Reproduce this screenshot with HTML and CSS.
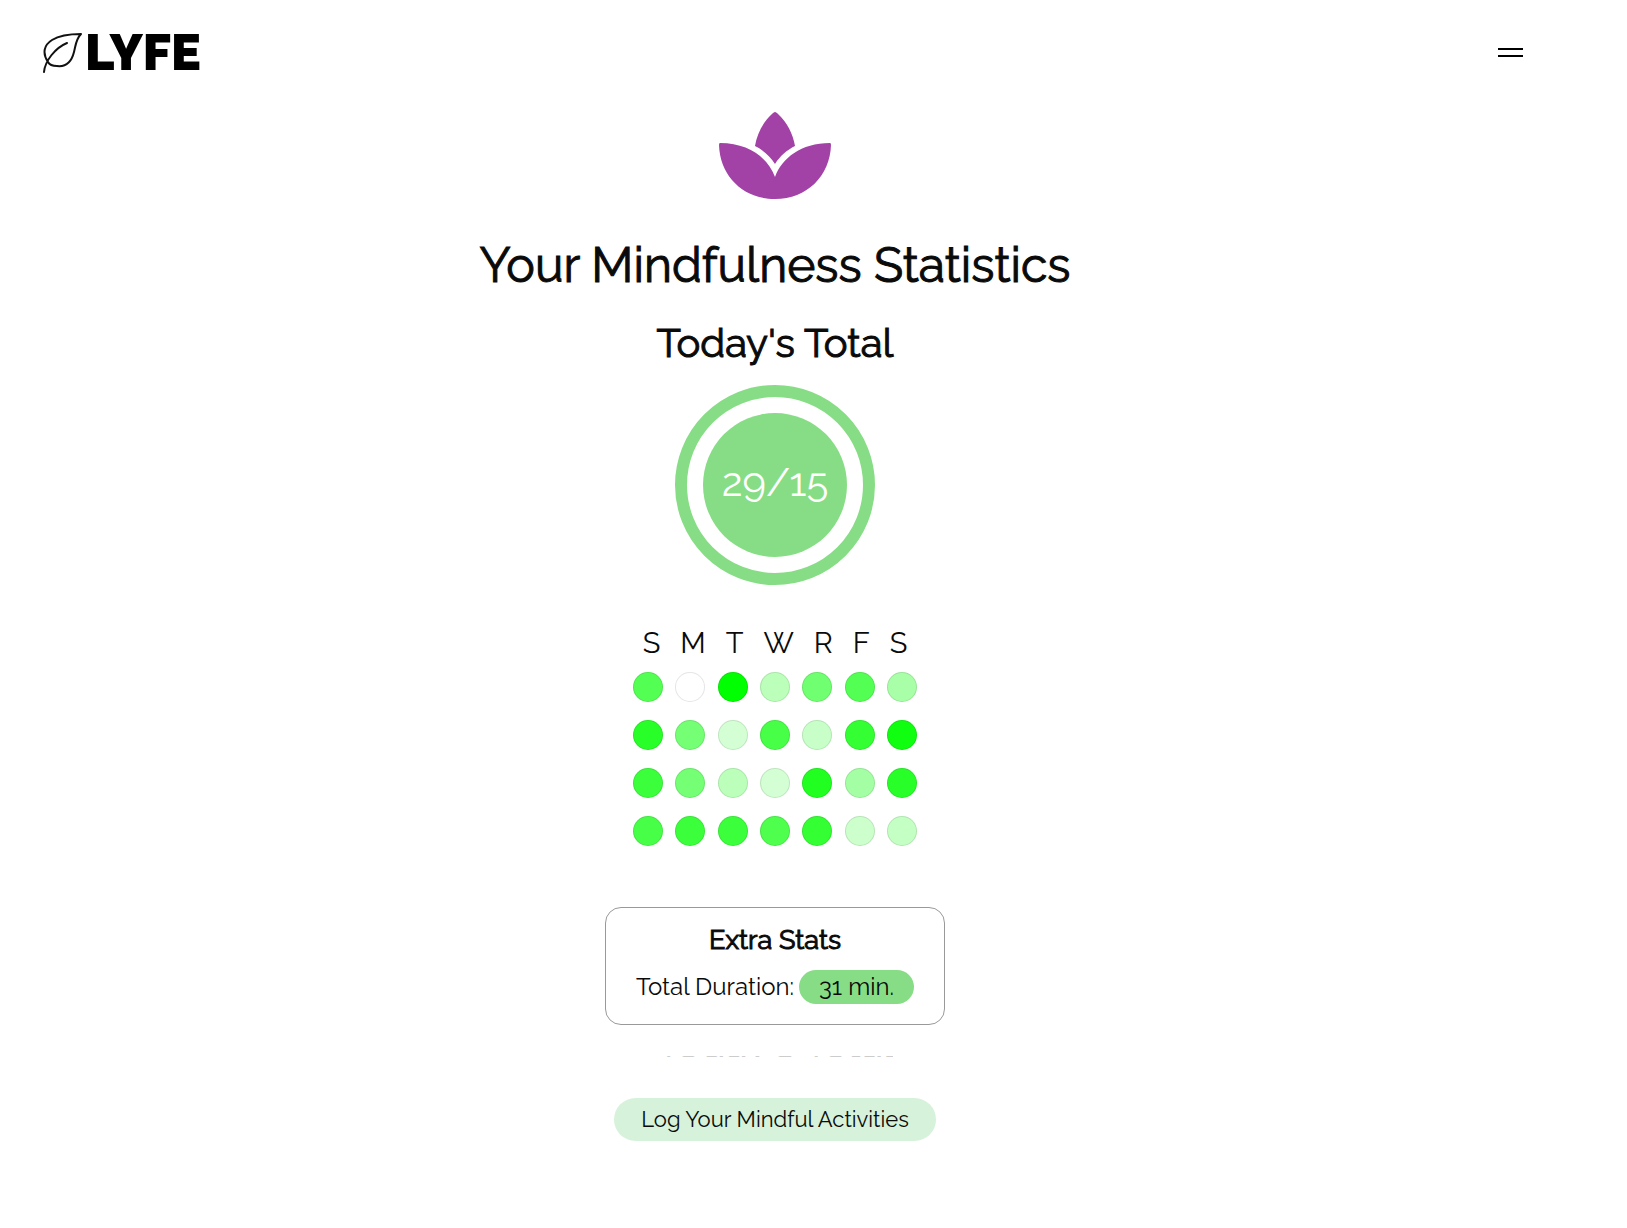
FILE: index.html
```html
<!DOCTYPE html>
<html lang="en">
<head>
  <meta charset="utf-8">
  <meta name="viewport" content="width=device-width, initial-scale=1">
  <title>Lyfe – Your Mindfulness Statistics</title>
  <link rel="stylesheet" href="styles.css">
</head>
<body>
  <header class="topbar">
    <a class="logo" href="#">
      <svg class="logo-leaf" viewBox="0 0 40 40" aria-hidden="true">
        <path d="M1 39C2 28 12 15 24 10M5 29C-1 20 1 12 9 7C17 2 28 1 38 1C33 6 33 11 31 19C28 31 22 34 14 33C9 33 6 31 5 29Z"/>
      </svg>
      <span>LYFE</span>
    </a>
    <button class="menu-toggle" type="button" aria-label="Open menu">
      <span></span>
      <span></span>
    </button>
  </header>

  <main class="stats">
    <svg class="lotus" viewBox="0 0 112 88" aria-hidden="true">
      <path d="M56 0C57 0 58 1 59 2C68 10 74 22 76 34C68 38 61 44 56 52C51 44 44 38 36 34C38 22 44 10 53 2C54 1 55 0 56 0Z"/>
      <path d="M56 65C63 46 82 31 111 31Q112 31 112 33C111 64 88 87 56 87C24 87 1 64 0 33Q0 31 1 31C30 31 49 46 56 65Z"/>
    </svg>
    <h1>Your Mindfulness Statistics</h1>

    <section class="today">
      <h2>Today's Total</h2>
      <div class="ring"><div class="ring-core">29/15</div></div>
    </section>

    <section class="month" aria-label="Last four weeks">
      <div class="weekdays">
        <span>S</span><span>M</span><span>T</span><span>W</span><span>R</span><span>F</span><span>S</span>
      </div>
      <div class="days">
        <i style="--level:#54ff54"></i><i style="--level:#ffffff"></i><i style="--level:#00ff00"></i><i style="--level:#bbffbb"></i><i style="--level:#70ff70"></i><i style="--level:#54ff54"></i><i style="--level:#a8ffa8"></i>
        <i style="--level:#28ff28"></i><i style="--level:#74ff74"></i><i style="--level:#d4ffd4"></i><i style="--level:#48ff48"></i><i style="--level:#c8ffc8"></i><i style="--level:#33ff33"></i><i style="--level:#10ff10"></i>
        <i style="--level:#3cff3c"></i><i style="--level:#74ff74"></i><i style="--level:#bbffbb"></i><i style="--level:#d4ffd4"></i><i style="--level:#20ff20"></i><i style="--level:#a4ffa4"></i><i style="--level:#28ff28"></i>
        <i style="--level:#48ff48"></i><i style="--level:#3cff3c"></i><i style="--level:#3cff3c"></i><i style="--level:#4eff4e"></i><i style="--level:#33ff33"></i><i style="--level:#ccffcc"></i><i style="--level:#c4ffc4"></i>
      </div>
    </section>

    <section class="extra">
      <h3>Extra Stats</h3>
      <p>Total Duration: <span class="pill">31 min.</span></p>
    </section>

    <div class="peek" aria-hidden="true"><span>Today's Total</span></div>

    <button class="log-button" type="button">Log Your Mindful Activities</button>
  </main>
</body>
</html>
```

FILE: styles.css
```css
* {
  box-sizing: border-box;
}

body {
  margin: 0;
  padding-right: 77px;
  background: #fff;
  color: #0a0a0a;
  font-family: Raleway, Lato, "Open Sans", sans-serif;
}

h1,
h2,
h3,
p {
  margin: 0;
}

h1,
h2,
h3 {
  font-weight: 400;
  -webkit-text-stroke: 1px currentColor;
}

.topbar {
  display: flex;
  align-items: center;
  justify-content: space-between;
  height: 104px;
  padding: 0 27px 0 43px;
}

.logo {
  display: flex;
  align-items: center;
  gap: 2px;
  margin-top: 2px;
  color: #000;
  font-size: 50px;
  font-weight: 900;
  line-height: 50px;
  text-decoration: none;
}

.logo-leaf {
  width: 40px;
  height: 40px;
  fill: none;
  stroke: #111;
  stroke-width: 2;
  stroke-linecap: round;
  stroke-linejoin: round;
}

.menu-toggle {
  display: grid;
  gap: 5px;
  padding: 0;
  border: 0;
  background: none;
}

.menu-toggle span {
  width: 25px;
  height: 2px;
  background: #000;
}

.stats {
  display: flex;
  flex-direction: column;
  align-items: center;
  padding: 8px 0 48px;
}

.lotus {
  width: 112px;
  height: 88px;
  fill: #a241a6;
}

h1 {
  margin-top: 35px;
  font-size: 48px;
  line-height: 60px;
}

.today {
  display: flex;
  flex-direction: column;
  align-items: center;
  gap: 18px;
  margin-top: 24px;
}

h2 {
  font-size: 40px;
  line-height: 48px;
}

.ring {
  display: grid;
  place-items: center;
  width: 200px;
  height: 200px;
  border: 12px solid #87dd85;
  border-radius: 50%;
}

.ring-core {
  display: grid;
  place-items: center;
  width: 144px;
  height: 144px;
  padding-bottom: 8px;
  border-radius: 50%;
  background: #87dd85;
  color: #fff;
  font-size: 40px;
}

.month {
  display: grid;
  justify-items: center;
  gap: 11px;
  margin-top: 40px;
}

.weekdays {
  display: flex;
  gap: 20px;
  font-size: 29px;
  line-height: 36px;
}

.days {
  display: grid;
  grid-template-columns: repeat(7, 30px);
  justify-content: space-between;
  row-gap: 18px;
  width: 284px;
}

.days i {
  height: 30px;
  border: 1px solid rgba(0, 0, 0, 0.1);
  border-radius: 50%;
  background: var(--level);
}

.extra {
  display: grid;
  justify-items: center;
  gap: 13px;
  margin-top: 61px;
  padding: 15px 30px 20px;
  border: 1px solid #999;
  border-radius: 16px;
}

h3 {
  font-size: 27px;
  line-height: 34px;
}

.extra p {
  display: flex;
  align-items: center;
  gap: 5px;
  font-size: 24px;
  line-height: 34px;
}

.pill {
  padding: 0 20px;
  border-radius: 17px;
  background: #87dd85;
}

.peek {
  display: flex;
  align-items: flex-end;
  height: 1px;
  margin-top: 31px;
  overflow: hidden;
  color: #ccc;
  font-size: 40px;
  line-height: 26px;
}

.log-button {
  margin-top: 41px;
  padding: 0 27px;
  border: 0;
  border-radius: 22px;
  background: #d7f2db;
  color: #0a0a0a;
  font: 400 22px/43px Raleway, Lato, "Open Sans", sans-serif;
}
```
